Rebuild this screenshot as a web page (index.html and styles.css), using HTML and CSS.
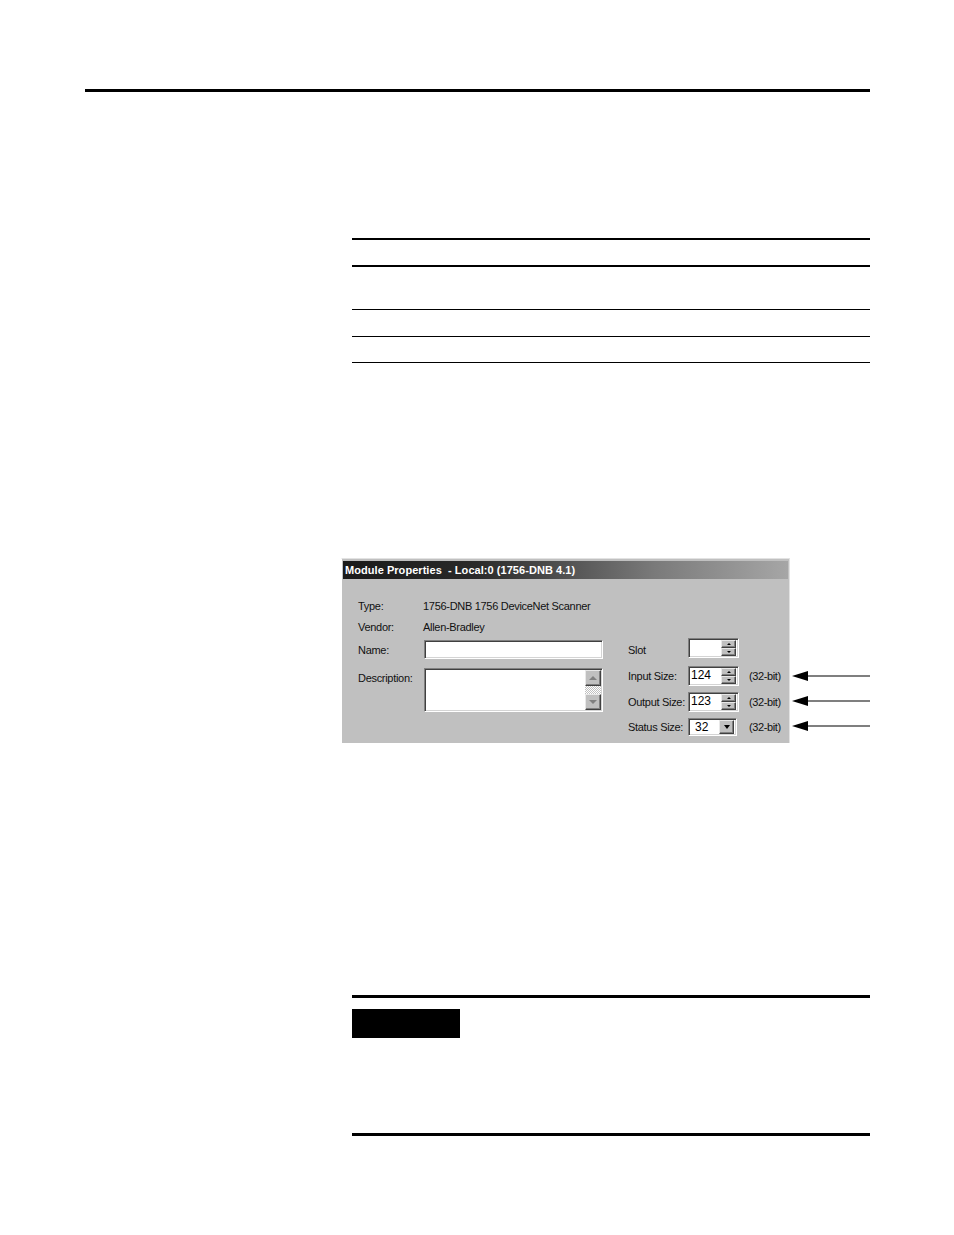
FILE: index.html
```html
<!DOCTYPE html>
<html lang="en">
<head>
<meta charset="utf-8">
<title>Module Properties</title>
<link rel="stylesheet" href="styles.css">
</head>
<body>
<div class="page">
  <div class="top-rule"></div>
  <div class="column">
    <div class="table">
      <div class="trow head"></div>
      <div class="trow r2"></div>
      <div class="trow r3"></div>
      <div class="trow r4"></div>
    </div>

    <div class="figure">
      <div class="dialog">
        <div class="titlebar">Module Properties&nbsp; - Local:0 (1756-DNB 4.1)</div>
        <div class="dbody">
          <div class="info">
            <div class="irow"><span class="ilabel">Type:</span><span>1756-DNB 1756 DeviceNet Scanner</span></div>
            <div class="irow vendor"><span class="ilabel">Vendor:</span><span>Allen-Bradley</span></div>
          </div>
          <div class="fields">
            <div class="left">
              <div class="frow">
                <span class="flabel">Name:</span>
                <div class="sunken namebox"></div>
              </div>
              <div class="frow desc">
                <span class="flabel top">Description:</span>
                <div class="sunken descbox">
                  <div class="scroll">
                    <div class="sbtn"><span class="tri up gray"></span></div>
                    <div class="strack"></div>
                    <div class="sbtn"><span class="tri down gray"></span></div>
                  </div>
                </div>
              </div>
            </div>
            <div class="right">
              <div class="rrow">
                <span class="rlabel slot">Slot</span>
                <div class="sunken spin">
                  <span class="val"></span>
                  <div class="btns">
                    <div class="ubtn"><span class="tri up small"></span></div>
                    <div class="ubtn"><span class="tri down small"></span></div>
                  </div>
                </div>
              </div>
              <div class="rrow r-input">
                <span class="rlabel">Input Size:</span>
                <div class="sunken spin">
                  <span class="val">124</span>
                  <div class="btns">
                    <div class="ubtn"><span class="tri up small"></span></div>
                    <div class="ubtn"><span class="tri down small"></span></div>
                  </div>
                </div>
                <span class="bits">(32-bit)</span>
              </div>
              <div class="rrow r-output">
                <span class="rlabel">Output Size:</span>
                <div class="sunken spin">
                  <span class="val">123</span>
                  <div class="btns">
                    <div class="ubtn"><span class="tri up small"></span></div>
                    <div class="ubtn"><span class="tri down small"></span></div>
                  </div>
                </div>
                <span class="bits">(32-bit)</span>
              </div>
              <div class="rrow r-status">
                <span class="rlabel">Status Size:</span>
                <div class="sunken combo">
                  <span class="val cval">32</span>
                  <div class="cbtn"><span class="tri down black"></span></div>
                </div>
                <span class="bits combo-bits">(32-bit)</span>
              </div>
            </div>
          </div>
        </div>
      </div>
      <div class="arrows">
        <svg class="arrow" width="80" height="10" viewBox="0 0 80 10"><polygon points="2,5 18,0 18,10" fill="#000"/><line x1="17" y1="5" x2="80" y2="5" stroke="#000" stroke-width="1.2"/></svg>
        <svg class="arrow" width="80" height="10" viewBox="0 0 80 10"><polygon points="2,5 18,0 18,10" fill="#000"/><line x1="17" y1="5" x2="80" y2="5" stroke="#000" stroke-width="1.2"/></svg>
        <svg class="arrow" width="80" height="10" viewBox="0 0 80 10"><polygon points="2,5 18,0 18,10" fill="#000"/><line x1="17" y1="5" x2="80" y2="5" stroke="#000" stroke-width="1.2"/></svg>
      </div>
    </div>

    <div class="note">
      <div class="note-label"></div>
    </div>
  </div>
</div>
</body>
</html>
```

FILE: styles.css
```css
html, body {
  margin: 0;
  padding: 0;
  background: #fff;
}
body {
  font-family: "Liberation Sans", Arial, sans-serif;
  color: #000;
}
.page {
  width: 954px;
  height: 1235px;
  overflow: hidden;
}
.top-rule {
  margin-top: 89px;
  margin-left: 85px;
  width: 785px;
  height: 3px;
  background: #000;
}
.column {
  margin-left: 352px;
  width: 518px;
}
.table {
  margin-top: 146px;
  border-top: 2px solid #000;
}
.trow.head { height: 25px; border-bottom: 2px solid #000; }
.trow.r2 { height: 42px; border-bottom: 1px solid #000; }
.trow.r3 { height: 26px; border-bottom: 1px solid #000; }
.trow.r4 { height: 25px; border-bottom: 1px solid #000; }

.figure {
  margin-top: 195px;
  margin-left: -11px;
  display: flex;
  align-items: flex-start;
}
.dialog {
  width: 449px;
  box-sizing: border-box;
  background: #c0c0c0;
  border-left: 1px solid #fff;
  border-top: 1px solid #e2e2e2;
  border-right: 1px solid #e2e2e2;
  padding: 2px 1px 0 1px;
  font-size: 11px;
  letter-spacing: -0.3px;
  color: #111;
}
.titlebar {
  height: 18px;
  line-height: 18px;
  padding-left: 2px;
  background: linear-gradient(to right, #1a1a1a 0%, #2a2a2a 30%, #7a7a7a 70%, #a6a6a6 100%);
  color: #fff;
  font-weight: bold;
  font-size: 11px;
  letter-spacing: 0.05px;
  white-space: nowrap;
}
.dbody {
  height: 164px;
  box-sizing: border-box;
  padding-left: 15px;
  padding-top: 21px;
}
.irow {
  display: flex;
  height: 13px;
  line-height: 13px;
}
.irow.vendor { margin-top: 8px; }
.ilabel { width: 65px; }
.fields {
  margin-top: 4px;
  display: flex;
  gap: 25px;
}
.left {
  width: 245px;
  padding-top: 2px;
}
.frow {
  display: flex;
  align-items: center;
}
.frow.desc {
  margin-top: 9px;
  align-items: flex-start;
}
.flabel { width: 66px; }
.flabel.top { padding-top: 4px; }

.sunken {
  box-sizing: border-box;
  background: #fff;
  border-top: 1px solid #808080;
  border-left: 1px solid #808080;
  border-right: 1px solid #fff;
  border-bottom: 1px solid #fff;
  box-shadow: inset 1px 1px 0 #404040, inset -1px -1px 0 #d4d4d4;
}
.namebox {
  width: 179px;
  height: 19px;
}
.descbox {
  width: 179px;
  height: 44px;
  display: flex;
  justify-content: flex-end;
  padding: 1px;
}
.scroll {
  width: 16px;
  display: flex;
  flex-direction: column;
}
.sbtn, .ubtn, .cbtn {
  box-sizing: border-box;
  background: #c0c0c0;
  border-top: 1px solid #e8e8e8;
  border-left: 1px solid #e8e8e8;
  border-right: 1px solid #404040;
  border-bottom: 1px solid #404040;
  box-shadow: inset -1px -1px 0 #808080;
  display: flex;
  align-items: center;
  justify-content: center;
}
.sbtn { height: 16px; }
.strack {
  height: 8px;
  background-color: #fff;
  background-image: repeating-conic-gradient(#c0c0c0 0 25%, #fff 0 50%);
  background-size: 2px 2px;
}
.tri {
  width: 0;
  height: 0;
  border-left: 4px solid transparent;
  border-right: 4px solid transparent;
}
.tri.up { border-bottom: 4px solid #808080; }
.tri.down { border-top: 4px solid #808080; }
.tri.small { border-left-width: 2px; border-right-width: 2px; }
.tri.small.up { border-bottom: 2px solid #000; }
.tri.small.down { border-top: 2px solid #000; }
.tri.black.down { border-top: 4px solid #000; border-left-width: 3.5px; border-right-width: 3.5px; }

.right {
  display: flex;
  flex-direction: column;
}
.rrow {
  display: flex;
  align-items: center;
}
.r-input { margin-top: 8px; }
.r-output, .r-status { margin-top: 6px; }
.rlabel { width: 60px; white-space: nowrap; }
.rlabel.slot { padding-top: 3px; }
.spin {
  width: 51px;
  height: 20px;
  display: flex;
  justify-content: space-between;
  align-items: stretch;
  padding: 1px 1px 1px 2px;
}
.val {
  font-size: 12px;
  line-height: 15px;
  letter-spacing: 0;
  color: #000;
}
.btns {
  width: 15px;
  margin-right: 1px;
  display: flex;
  flex-direction: column;
}
.ubtn { height: 8px; }
.combo {
  width: 49px;
  height: 18px;
  display: flex;
  justify-content: space-between;
  padding: 1px;
}
.cval {
  padding-left: 5px;
  line-height: 14px;
}
.cbtn {
  width: 15px;
  margin-right: 1px;
}
.bits {
  margin-left: 10px;
  white-space: nowrap;
  letter-spacing: -0.4px;
}
.bits.combo-bits { margin-left: 12px; }

.arrows {
  width: 80px;
  padding-top: 113px;
  display: flex;
  flex-direction: column;
  gap: 15px;
}
.arrow { display: block; }

.note {
  margin-top: 252px;
  border-top: 3px solid #000;
  border-bottom: 3px solid #000;
  padding-top: 11px;
  padding-bottom: 95px;
}
.note-label {
  width: 108px;
  height: 29px;
  background: #000;
}
```
